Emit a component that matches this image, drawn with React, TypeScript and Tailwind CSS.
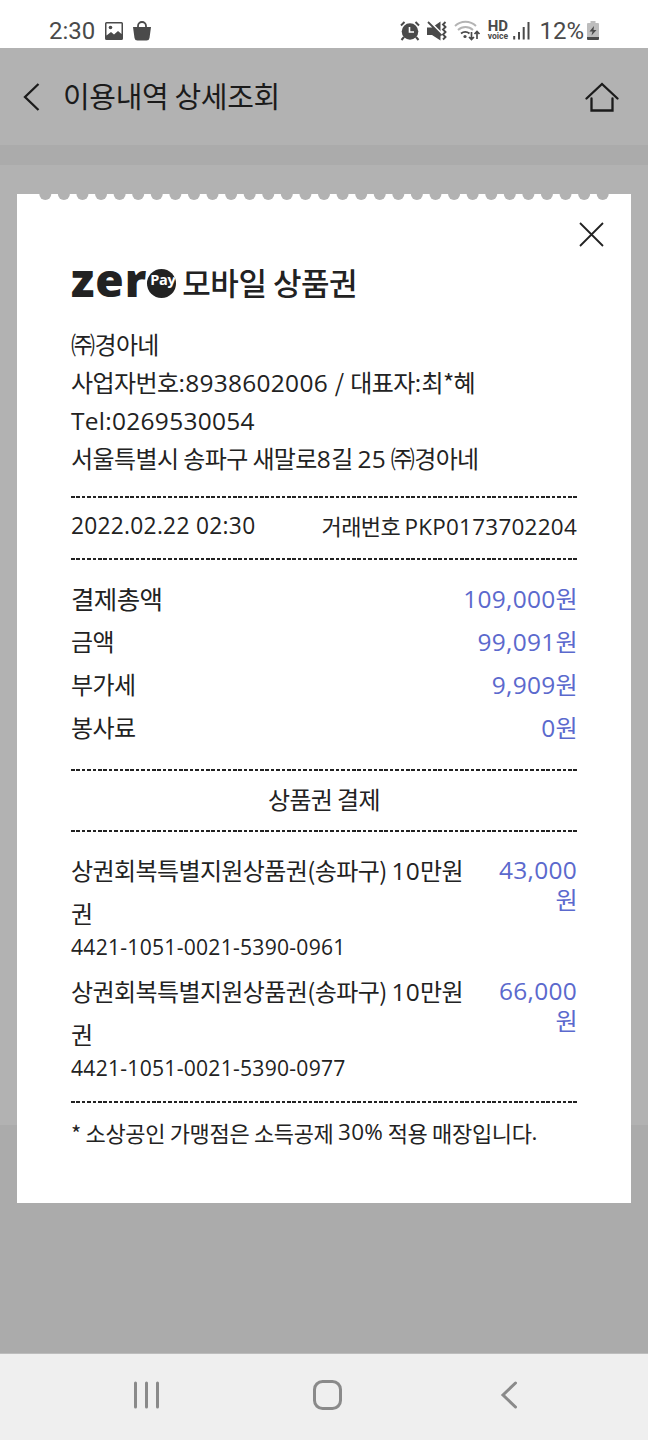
import { Fragment } from "react";

interface IAmountRow {
  label: string;
  value: string;
  large?: boolean;
}

interface IVoucher {
  name: string;
  amount: string;
  serial: string;
}

const amountRows: IAmountRow[] = [
  { label: "결제총액", value: "109,000원", large: true },
  { label: "금액", value: "99,091원" },
  { label: "부가세", value: "9,909원" },
  { label: "봉사료", value: "0원" },
];

const vouchers: IVoucher[] = [
  { name: "상권회복특별지원상품권(송파구) 10만원권", amount: "43,000원", serial: "4421-1051-0021-5390-0961" },
  { name: "상권회복특별지원상품권(송파구) 10만원권", amount: "66,000원", serial: "4421-1051-0021-5390-0977" },
];

const holes = Array.from({ length: 31 }, (_, i) => 28.3 + i * 18.58);

// Hangul is set slightly tight, digits and latin slightly open.
function Mixed({ children }: { children: string }) {
  return (
    <>
      {children.split(/([0-9A-Za-z,.:%-]+)/).map((part, i) =>
        i % 2 ? (
          <span key={i} className="font-['Open_Sans'] text-[1.02em] leading-none tracking-[0.012em]">
            {part}
          </span>
        ) : (
          <Fragment key={i}>{part}</Fragment>
        )
      )}
    </>
  );
}

function DashedLine() {
  return (
    <div className="h-[2px] bg-[repeating-linear-gradient(90deg,#222_0,#222_3.6px,transparent_3.6px,transparent_5.402px)]" />
  );
}

function StatusBar() {
  return (
    <div className="flex h-12 items-center bg-white pl-[49px] pr-[49px] pt-[13px] text-[#4a4a4a]">
      <span className="font-['Roboto'] text-[24px] leading-none">2:30</span>
      <svg className="ml-[10px]" width="18" height="18" viewBox="0 0 18 18">
        <path
          fill="currentColor"
          fillRule="evenodd"
          d="M1.5 0h15A1.5 1.5 0 0 1 18 1.5v15a1.5 1.5 0 0 1-1.5 1.5h-15A1.5 1.5 0 0 1 0 16.500v-15A1.5 1.5 0 0 1 1.500 0ZM1.500 1.500v12l4.500-3.500 3 2.500 4-3.500 3.500 3v-10.500Z"
        />
        <circle cx="5.500" cy="5.500" r="1.800" fill="currentColor" />
      </svg>
      <svg className="ml-[10px]" width="18" height="20" viewBox="0 0 18 20">
        <path d="M5 8V5a4 4 0 0 1 8 0v3" fill="none" stroke="currentColor" strokeWidth="1.800" />
        <path d="M0 6h18l-1.500 11a3 3 0 0 1-3 2.500h-9a3 3 0 0 1-3-2.500Z" fill="currentColor" />
      </svg>
      <div className="ml-auto flex items-center">
        <svg width="20" height="20" viewBox="0 0 20 20">
          <circle cx="10" cy="10.500" r="8.300" fill="currentColor" />
          <path d="M1 4.500 4.500 1M19 4.500 15.500 1M4 16l-2.500 3M16 16l2.500 3" stroke="currentColor" strokeWidth="2" fill="none" />
          <path d="M9.500 6v5h4.500" stroke="white" strokeWidth="1.600" fill="none" />
        </svg>
        <svg className="ml-[7px]" width="20" height="20" viewBox="0 0 20 20">
          <path d="M0 6.500h5l8.500-6v19L5 14H0Z" fill="currentColor" />
          <path d="M2 0 15 13" stroke="white" strokeWidth="2" />
          <path d="M1 1 14.500 14.500" stroke="currentColor" strokeWidth="1.800" />
          <path d="M18.500 1l-2.500 2.500 2.500 2.500-2.500 2.500 2.500 2.500-2.500 2.500 2.500 2.500-2.500 2.500" fill="none" stroke="currentColor" strokeWidth="1.900" />
        </svg>
        <svg className="ml-[7px]" width="27" height="21" viewBox="0 0 27 21">
          <g fill="none" strokeWidth="1.900">
            <path d="M1 6a15 15 0 0 1 21 0M4 10a11 11 0 0 1 15 0" stroke="#b4b4b4" />
            <path d="M7 13.500a7 7 0 0 1 8.500 0" stroke="currentColor" />
            <path d="M17.500 12v7.500M15 17l2.500 2.500L20 17M23 19v-7.500M20.500 14l2.500-2.500L25.500 14" stroke="currentColor" strokeWidth="1.700" />
          </g>
          <circle cx="11" cy="16.500" r="1.600" fill="currentColor" />
        </svg>
        <div className="ml-[6px] flex w-[21px] flex-col items-center font-['Roboto'] font-bold">
          <span className="text-[15px] leading-[11px]">HD</span>
          <span className="text-[8.500px] leading-[8px]">voice</span>
        </div>
        <svg className="ml-[5px]" width="17" height="18" viewBox="0 0 17 18">
          <path d="M1.200 14v3.500M6 10v7.500M10.700 5v12.500M15.500 0v17.500" stroke="currentColor" strokeWidth="2" />
        </svg>
        <span className="ml-[9px] font-['Roboto'] text-[24px] leading-none">12%</span>
        <svg className="ml-[3px]" width="12" height="19" viewBox="0 0 12 19">
          <path d="M3.500 0h5v2H11a1 1 0 0 1 1 1v13H0V3a1 1 0 0 1 1-1h2.500Z" fill="#bdbdbd" />
          <path d="M0 16h12v2a1 1 0 0 1-1 1H1a1 1 0 0 1-1-1Z" fill="currentColor" />
          <path d="M7 5 2.500 10.500h3L4.500 14.500 9.500 9H6.500Z" fill="currentColor" />
        </svg>
      </div>
    </div>
  );
}

function PageHeader() {
  return (
    <header className="flex h-[97px] items-center bg-[#b2b2b2] pl-[22px] pr-[29px] text-[#1b1b1b]">
      <svg width="18" height="28" viewBox="0 0 18 28">
        <path d="M16.500 1 3 14l13.500 13" fill="none" stroke="currentColor" strokeWidth="2.300" />
      </svg>
      <h1 className="ml-[23px] pb-[2px] text-[29px] leading-none tracking-[-0.35px]">이용내역 상세조회</h1>
      <svg className="ml-auto" width="34" height="30" viewBox="0 0 34 30">
        <path d="M1.500 16.500 17 2l15.500 14.500M6.500 16.500v12h21v-12" fill="none" stroke="currentColor" strokeWidth="2.300" strokeLinecap="round" />
      </svg>
    </header>
  );
}

function Receipt() {
  return (
    <section className="absolute left-[17px] top-[194px] h-[1009px] w-[614px] bg-white px-[54px] text-[24px] tracking-[-0.6px] text-[#222]">
      <svg className="absolute left-0 top-0" width="614" height="7" viewBox="0 0 614 7">
        {holes.map((x) => (
          <circle key={x} cx={x} cy="0" r="6" fill="#b2b2b2" />
        ))}
      </svg>
      <button className="absolute right-[27px] top-[28px]" aria-label="닫기">
        <svg width="25" height="25" viewBox="0 0 25 25">
          <path d="M1 1l23 23M24 1 1 24" stroke="#222" strokeWidth="1.800" />
        </svg>
      </button>

      <div className="flex h-[131px] items-end pb-[19px]">
        <div className="flex h-[46px] items-center">
          <span className="pb-[9px] font-['Open_Sans'] text-[46px] font-extrabold leading-[46px] tracking-[1px]">zer</span>
          <span className="flex size-[29px] items-center overflow-hidden rounded-full bg-[#222] pb-[5px] pl-[3px] font-['Open_Sans'] text-[14.500px] font-bold leading-none tracking-[-0.4px] text-white">
            Pay
          </span>
          <h2 className="ml-[6px] pb-[4px] text-[31px] font-medium leading-none tracking-[-0.5px]">모바일 상품권</h2>
        </div>
      </div>

      <div className="leading-[38px]">
        <p>㈜경아네</p>
        <p className="[word-spacing:2px]"><Mixed>사업자번호:8938602006 / 대표자:최*혜</Mixed></p>
        <p><Mixed>Tel:0269530054</Mixed></p>
        <p><Mixed>서울특별시 송파구 새말로8길 25 ㈜경아네</Mixed></p>
      </div>

      <div className="mt-[19px]"><DashedLine /></div>
      <div className="flex h-[60px] items-center justify-between pb-[6px] text-[22px]">
        <span className="text-[22.300px] [word-spacing:2px]"><Mixed>2022.02.22 02:30</Mixed></span>
        <span><Mixed>거래번호 PKP0173702204</Mixed></span>
      </div>
      <DashedLine />

      <dl className="mb-[21px] mt-[16px] leading-[43px]">
        {amountRows.map((row) => (
          <div key={row.label} className="flex h-[43px] justify-between">
            <dt className={row.large ? "text-[25.500px]" : ""}>{row.label}</dt>
            <dd className="text-[#5b69cd]"><Mixed>{row.value}</Mixed></dd>
          </div>
        ))}
      </dl>

      <DashedLine />
      <div className="flex h-[59px] items-center justify-center pb-[3px]">상품권 결제</div>
      <DashedLine />

      <ul className="mb-[20px] mt-[16px] space-y-[9px]">
        {vouchers.map((voucher) => (
          <li key={voucher.serial} className="flex justify-between">
            <div className="w-[400px]">
              <p className="break-all leading-[43px]"><Mixed>{voucher.name}</Mixed></p>
              <p className="h-[26px] text-[20.700px] leading-[24px]"><Mixed>{voucher.serial}</Mixed></p>
            </div>
            <p className="w-[90px] break-all pt-[6px] text-right leading-[30px] text-[#5b69cd]">
              <Mixed>{voucher.amount}</Mixed>
            </p>
          </li>
        ))}
      </ul>

      <DashedLine />
      <p className="flex h-[62px] items-center whitespace-pre pb-[4px] text-[22px] tracking-[-0.34px]">
        <Mixed>* 소상공인 가맹점은 소득공제 30% 적용 매장입니다.</Mixed>
      </p>
    </section>
  );
}

function NavigationBar() {
  return (
    <nav className="flex h-[87px] items-center border-t border-[#bdbdbd] bg-[#efefef] pb-[4px] pl-[133px] text-[#8a8a8a]">
      <svg width="27" height="28" viewBox="0 0 27 28">
        <path d="M2.500 2v24M13.500 2v24M24.500 2v24" stroke="currentColor" strokeWidth="3" strokeLinecap="round" />
      </svg>
      <svg className="ml-[153px]" width="30" height="30" viewBox="0 0 30 30">
        <rect x="1.500" y="1.500" width="26" height="27" rx="8" fill="none" stroke="currentColor" strokeWidth="3" />
      </svg>
      <svg className="ml-[157px]" width="18" height="28" viewBox="0 0 18 28">
        <path d="M15.500 2 3 14l12.500 12" fill="none" stroke="currentColor" strokeWidth="3" strokeLinecap="round" />
      </svg>
    </nav>
  );
}

export default function App() {
  return (
    <div className="relative flex h-[1440px] w-[648px] flex-col overflow-hidden bg-[#ababab] font-['Noto_Sans_CJK_KR',sans-serif]">
      <StatusBar />
      <PageHeader />
      <div className="h-5 bg-[#ababab]" />
      <div className="h-[960px] bg-[#b2b2b2]" />
      <div className="flex-1" />
      <NavigationBar />
      <Receipt />
    </div>
  );
}
